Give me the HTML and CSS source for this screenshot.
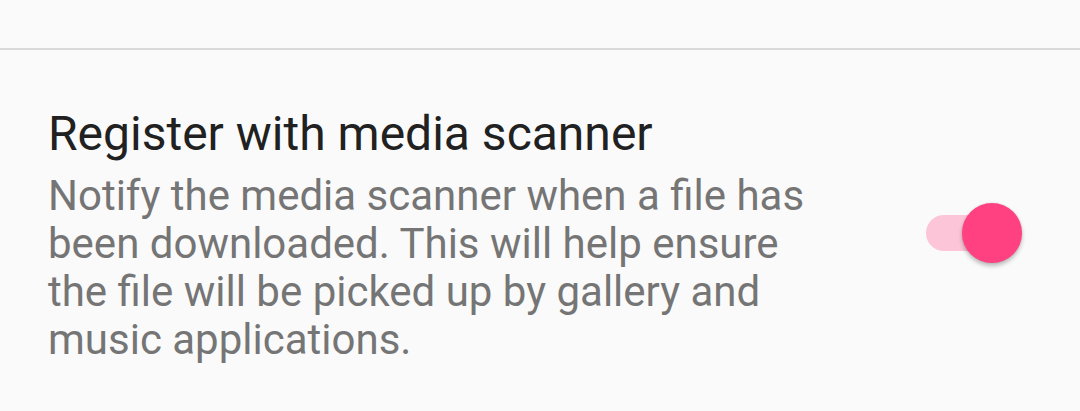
FILE: index.html
```html
<!DOCTYPE html>
<html lang="en">
<head>
  <meta charset="UTF-8" />
  <meta name="viewport" content="width=device-width, initial-scale=1" />
  <title>Settings</title>
  <link rel="stylesheet" href="styles.css">
</head>
<body>
  <div class="prev-item"></div>
  <div class="divider"></div>

  <div class="pref">
    <div class="pref-text">
      <div class="pref-title">Register with media scanner</div>
      <div class="pref-summary">Notify the media scanner when a file has been downloaded. This will help ensure the file will be picked up by gallery and music applications.</div>
    </div>
    <div class="switch on">
      <div class="switch-track"></div>
      <div class="switch-thumb"></div>
    </div>
  </div>
</body>
</html>
```

FILE: styles.css
```css
/* Global Styles */
body {
  font-family: Roboto, "Noto Sans", sans-serif;
  background-color: #fafafa;
  margin: 0;
  padding: 0;
}

.prev-item {
  height: 48px;
}
.divider {
  height: 2px;
  background-color: #dadada;
}

/* Preference Row */
.pref {
  display: flex;
  align-items: center;
  padding: 56px 58px 0 48px;
}
.pref-text {
  flex: 1;
}
.pref-title {
  font-size: 48px;
  line-height: 56px;
  color: #212121;
}
.pref-summary {
  margin-top: 10px;
  font-size: 42px;
  line-height: 48px;
  color: #757575;
  max-width: 770px;
}

/* Switch */
.switch {
  position: relative;
  width: 96px;
  height: 60px;
  margin-bottom: 4px;
}
.switch-track {
  position: absolute;
  left: 0;
  top: 12px;
  width: 90px;
  height: 36px;
  border-radius: 18px;
  background-color: #fcc5d8;
}
.switch-thumb {
  position: absolute;
  right: 0;
  top: 0;
  width: 60px;
  height: 60px;
  border-radius: 50%;
  background-color: #ff4081;
  box-shadow: 0 3px 4px rgba(0, 0, 0, 0.25), 0 0 2px rgba(0, 0, 0, 0.12);
}
```
